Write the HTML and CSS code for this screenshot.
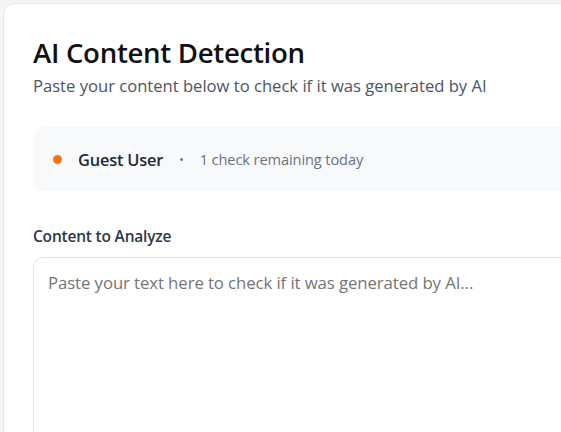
FILE: index.html
```html
<!DOCTYPE html>
<html lang="en">
<head>
<meta charset="utf-8">
<title>AI Content Detection</title>
<link rel="stylesheet" href="styles.css">
</head>
<body>
<main class="page">
  <section class="card">
    <h1 class="title">AI Content Detection</h1>
    <p class="subtitle">Paste your content below to check if it was generated by AI</p>

    <div class="status">
      <span class="dot"></span>
      <span class="user">Guest User</span>
      <span class="sep">•</span>
      <span class="remaining">1 check remaining today</span>
    </div>

    <label class="label" for="content">Content to Analyze</label>
    <textarea id="content" class="input" placeholder="Paste your text here to check if it was generated by AI..."></textarea>
  </section>
</main>
</body>
</html>
```

FILE: styles.css
```css
* { box-sizing: border-box; }
html, body { margin: 0; padding: 0; }
body {
  background: #f5f5f6;
  font-family: "Open Sans", "Noto Sans", "Liberation Sans", sans-serif;
  overflow: hidden;
  width: 561px;
  height: 432px;
}
.page {
  padding: 3px 0 0 3px;
}
.card {
  width: 820px;
  background: #ffffff;
  border: 1px solid #e6e7ea;
  border-radius: 12px;
  padding: 30px 29px 40px 29px;
  min-height: 600px;
}
.title {
  margin: 0;
  font-size: 27.6px;
  line-height: 36px;
  font-weight: 600;
  color: #111111;
  letter-spacing: -0.3px;
}
.subtitle {
  margin: 5px 0 0 0;
  font-size: 16.6px;
  line-height: 22px;
  color: #4b5563;
}
.status {
  margin-top: 30px;
  height: 64px;
  background: #f8f9fb;
  border-radius: 10px;
  display: flex;
  align-items: center;
  padding-left: 20px;
}
.dot {
  width: 9px;
  height: 9px;
  border-radius: 50%;
  background: #f97316;
  margin-right: 16px;
}
.user {
  font-size: 16.4px;
  font-weight: 600;
  color: #1f2937;
  letter-spacing: -0.2px;
}
.sep {
  margin: 0 16px 0 16px;
  color: #6b7280;
  font-size: 12px;
}
.remaining {
  font-size: 14.6px;
  color: #6b7280;
  letter-spacing: -0.1px;
}
.label {
  display: block;
  margin-top: 34px;
  font-size: 15.5px;
  line-height: 22px;
  font-weight: 600;
  color: #2d3748;
  letter-spacing: -0.2px;
}
.input {
  display: block;
  margin-top: 10px;
  width: 100%;
  height: 220px;
  border: 1px solid #e2e4e8;
  border-radius: 10px;
  padding: 13px 14px;
  font-family: inherit;
  font-size: 16.8px;
  line-height: 24px;
  color: #1f2937;
  resize: none;
  outline: none;
  background: #ffffff;
}
.input::placeholder {
  color: #757575;
  letter-spacing: -0.1px;
}
```
